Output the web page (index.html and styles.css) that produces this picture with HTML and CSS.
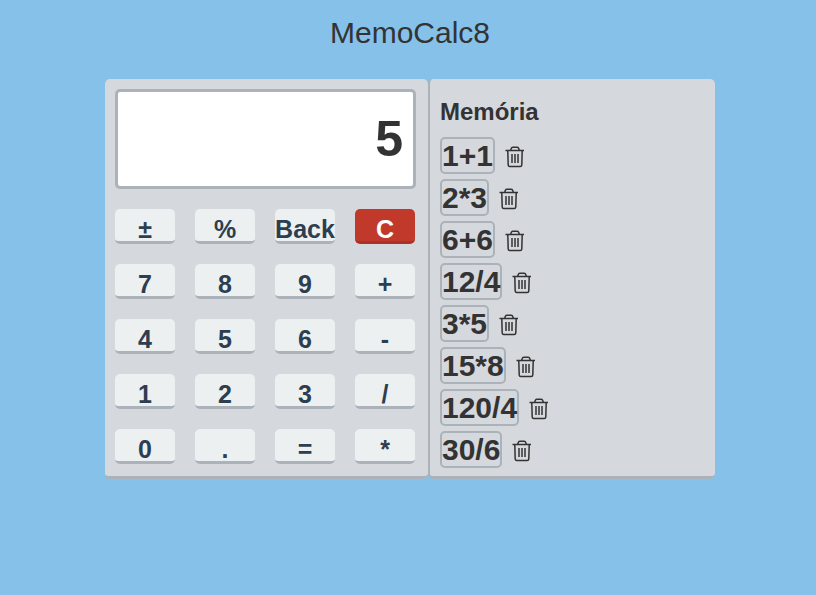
FILE: index.html
```html
<!DOCTYPE html>
<html lang="pt">
<head>
<meta charset="utf-8">
<meta name="viewport" content="width=device-width, initial-scale=1">
<title>MemoCalc8</title>
<link rel="stylesheet" href="styles.css">
</head>
<body>
<svg class="sprite" aria-hidden="true">
  <symbol id="trash" viewBox="0 0 20 22">
    <path d="M.5 4.500H19M5.500 4.500L6.500 2Q6.900 1.200 8 1.200H12Q13.100 1.200 13.500 2L14.500 4.500M2.800 5L3.200 19Q3.300 20.500 4.800 20.500H15.200Q16.700 20.500 16.800 19L17.200 5M7 8V17M10 8V17M13 8V17" fill="none" stroke="currentColor" stroke-width="1.500"/>
  </symbol>
</svg>
<h1 class="title">MemoCalc8</h1>
<main class="app">
  <section class="calculator" aria-label="Calculadora">
    <output class="screen">5</output>
    <div class="keys">
      <button class="key">±</button><button class="key">%</button><button class="key">Back</button><button class="key key-clear">C</button>
      <button class="key">7</button><button class="key">8</button><button class="key">9</button><button class="key">+</button>
      <button class="key">4</button><button class="key">5</button><button class="key">6</button><button class="key">-</button>
      <button class="key">1</button><button class="key">2</button><button class="key">3</button><button class="key">/</button>
      <button class="key">0</button><button class="key">.</button><button class="key">=</button><button class="key">*</button>
    </div>
  </section>
  <section class="memory">
    <h2 class="memory-title">Memória</h2>
    <ul class="entries">
      <li class="entry"><button class="recall">1+1</button><button class="remove" aria-label="Apagar 1+1"><svg class="icon"><use href="#trash"/></svg></button></li>
      <li class="entry"><button class="recall">2*3</button><button class="remove" aria-label="Apagar 2*3"><svg class="icon"><use href="#trash"/></svg></button></li>
      <li class="entry"><button class="recall">6+6</button><button class="remove" aria-label="Apagar 6+6"><svg class="icon"><use href="#trash"/></svg></button></li>
      <li class="entry"><button class="recall">12/4</button><button class="remove" aria-label="Apagar 12/4"><svg class="icon"><use href="#trash"/></svg></button></li>
      <li class="entry"><button class="recall">3*5</button><button class="remove" aria-label="Apagar 3*5"><svg class="icon"><use href="#trash"/></svg></button></li>
      <li class="entry"><button class="recall">15*8</button><button class="remove" aria-label="Apagar 15*8"><svg class="icon"><use href="#trash"/></svg></button></li>
      <li class="entry"><button class="recall">120/4</button><button class="remove" aria-label="Apagar 120/4"><svg class="icon"><use href="#trash"/></svg></button></li>
      <li class="entry"><button class="recall">30/6</button><button class="remove" aria-label="Apagar 30/6"><svg class="icon"><use href="#trash"/></svg></button></li>
    </ul>
  </section>
</main>
</body>
</html>
```
FILE: styles.css
```css
* {
  box-sizing: border-box;
}

body {
  margin: 0;
  padding: 16px 0 0 4px;
  background: #85c1e9;
  color: #333;
  font-family: "Liberation Sans", Arial, sans-serif;
}

button {
  font: inherit;
  color: inherit;
  cursor: pointer;
}

.sprite {
  display: none;
}

.title {
  margin: 0 0 29px;
  font-size: 30px;
  line-height: 34px;
  font-weight: 400;
  text-align: center;
}

.app {
  display: flex;
  max-width: 610px;
  margin: 0 auto;
}

.calculator,
.memory {
  background: #d5d8dc;
  border-bottom: 3px solid #abb2b9;
  border-radius: 5px;
}

.calculator {
  padding: 10px 12px 12px 10px;
}

.screen {
  display: flex;
  align-items: center;
  justify-content: flex-end;
  height: 100px;
  margin-bottom: 20px;
  padding: 0 10px;
  background: #fff;
  border: 3px solid #abb2b9;
  border-radius: 5px;
  font-size: 50px;
  font-weight: 700;
}

.keys {
  display: grid;
  grid-template-columns: repeat(4, 60px);
  gap: 20px;
  padding-right: 1px;
}

.key {
  height: 35px;
  padding: 6px 0 0;
  background: #ecf0f1;
  border: 0;
  border-bottom: 3px solid #abb2b9;
  border-radius: 5px;
  color: #2c3e50;
  font-size: 25px;
  line-height: 28px;
  font-weight: 700;
}

.key-clear {
  background: #c0392b;
  border-color: #a93226;
  color: #fff;
}

.memory {
  flex: 1;
  padding: 19px 10px 8px;
  border-left: 2px solid #abb2b9;
}

.memory-title {
  margin: 0 0 11px;
  font-size: 24px;
  line-height: 28px;
}

.entries {
  display: grid;
  gap: 5px;
  margin: 0;
  padding: 0;
  list-style: none;
}

.entry {
  display: flex;
  align-items: center;
  gap: 10px;
}

.recall {
  height: 37px;
  padding: 0;
  background: none;
  border: 2px solid #abb2b9;
  border-radius: 5px;
  font-size: 30px;
  line-height: 32px;
  font-weight: 700;
}

.remove {
  padding: 3px 0 0;
  background: none;
  border: 0;
}

.icon {
  display: block;
  width: 20px;
  height: 22px;
}
```
